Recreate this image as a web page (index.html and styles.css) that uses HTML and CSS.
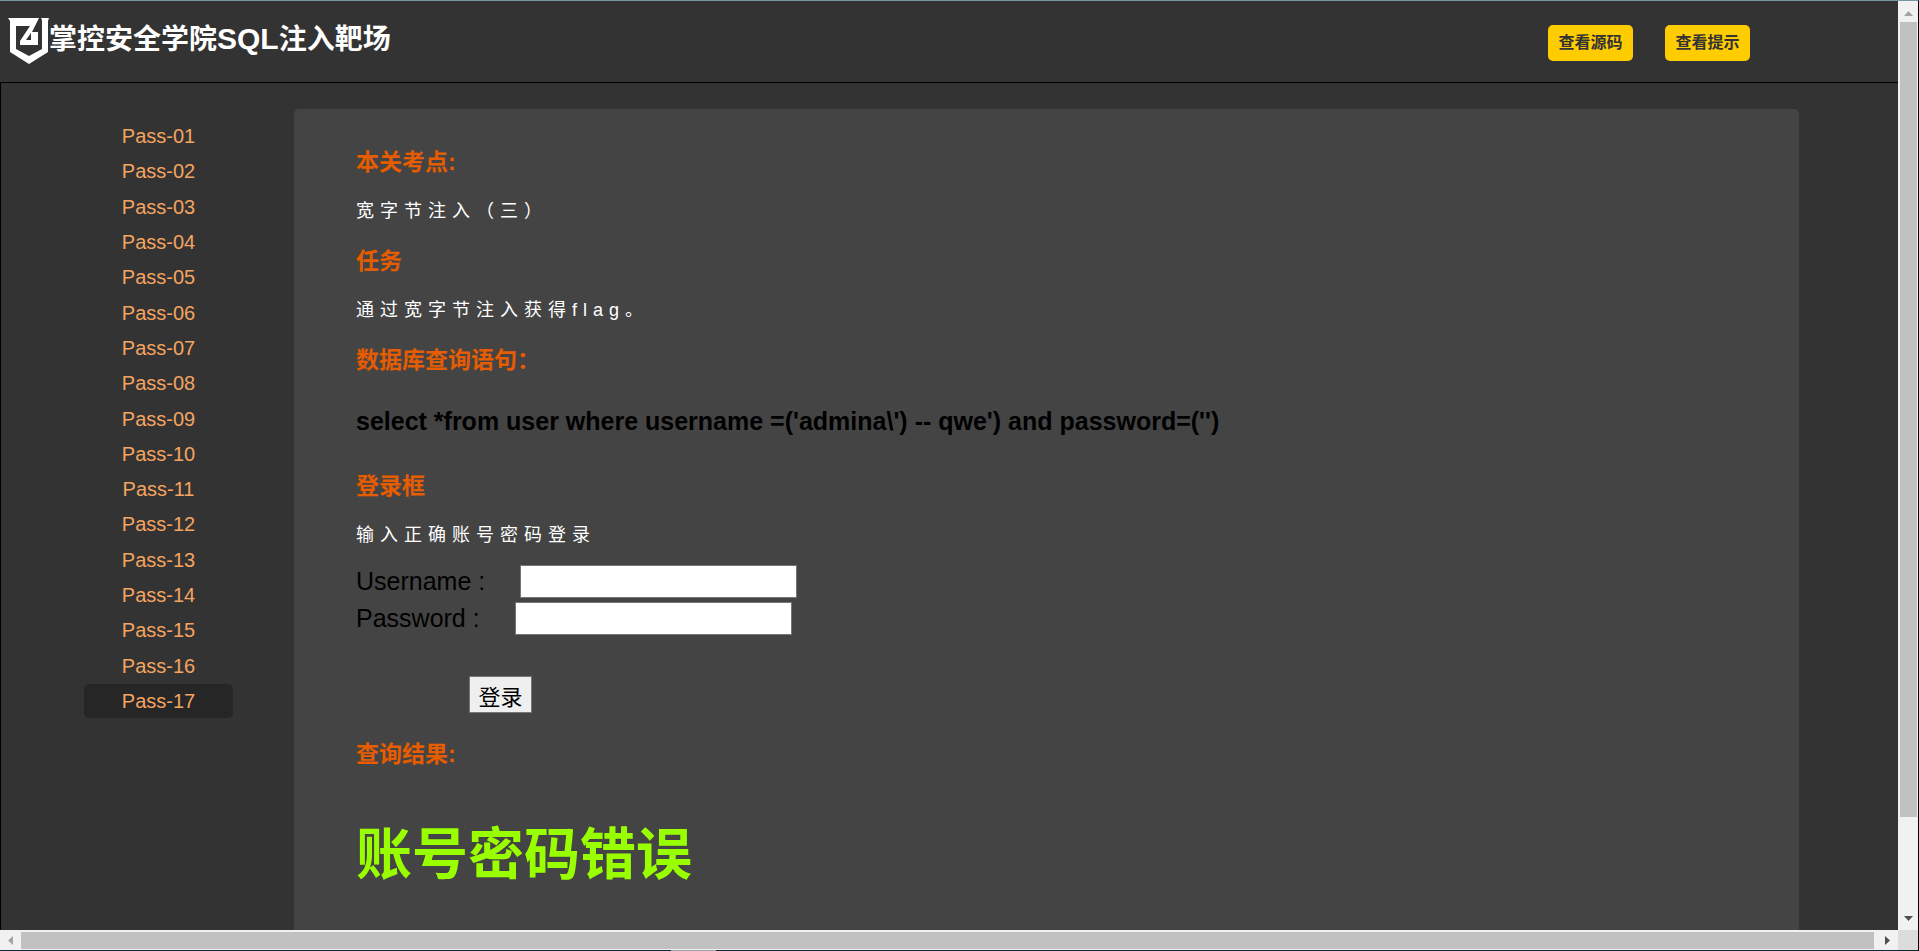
FILE: index.html
```html
<!DOCTYPE html>
<html lang="zh-CN">
<head>
<meta charset="utf-8">
<title>掌控安全学院SQL注入靶场</title>
<link rel="stylesheet" href="styles.css">
</head>
<body>
<div class="window">
  <div class="viewport">
    <header class="header">
      <a class="brand" href="#">
        <svg class="brand-mark" viewBox="0 0 41 46" aria-hidden="true">
          <path fill="#fff" fill-rule="evenodd" d="M0 0H31L24 14H30V27H12V23L22 8H8V31L21 38L34 31V2L33 0H41L40 3V34L21 46L2 34V3ZM18 22L23 15V22Z"/>
        </svg>
        <span class="brand-name">掌控安全学院<span class="brand-latin">SQL</span>注入靶场</span>
      </a>
      <div class="actions">
        <button class="action" type="button">查看源码</button>
        <button class="action" type="button">查看提示</button>
      </div>
    </header>
    <div class="body">
      <nav class="menu">
        <a href="#">Pass-01</a>
        <a href="#">Pass-02</a>
        <a href="#">Pass-03</a>
        <a href="#">Pass-04</a>
        <a href="#">Pass-05</a>
        <a href="#">Pass-06</a>
        <a href="#">Pass-07</a>
        <a href="#">Pass-08</a>
        <a href="#">Pass-09</a>
        <a href="#">Pass-10</a>
        <a href="#">Pass-11</a>
        <a href="#">Pass-12</a>
        <a href="#">Pass-13</a>
        <a href="#">Pass-14</a>
        <a href="#">Pass-15</a>
        <a href="#">Pass-16</a>
        <a class="current" href="#">Pass-17</a>
      </nav>
      <main class="panel">
        <h3 class="title">本关考点:</h3>
        <p class="text">宽字节注入（三）</p>
        <h3 class="title">任务</h3>
        <p class="text">通过宽字节注入获得flag。</p>
        <h3 class="title">数据库查询语句：</h3>
        <p class="query">select *from user where username =('admina\') -- qwe') and password=('')</p>
        <h3 class="title">登录框</h3>
        <p class="text">输入正确账号密码登录</p>
        <form class="login">
          <div class="field"><label for="username">Username :</label><input id="username" type="text"></div>
          <div class="field"><label for="password">Password :</label><input id="password" type="text"></div>
          <button class="submit" type="button">登录</button>
        </form>
        <h3 class="title">查询结果:</h3>
        <p class="result">账号密码错误</p>
      </main>
    </div>
  </div>
  <div class="bar bar-v">
    <svg class="arrow" viewBox="0 0 20 21"><path fill="#a3a3a3" d="M6 15L10.500 10L15 15Z"/></svg>
    <div class="thumb"></div>
    <svg class="arrow" viewBox="0 0 20 21"><path fill="#505050" d="M6 7H15L10.500 12Z"/></svg>
  </div>
  <div class="bar bar-h">
    <svg class="arrow" viewBox="0 0 21 20"><path fill="#a3a3a3" d="M13 6V15L8 10.500Z"/></svg>
    <div class="thumb"></div>
    <svg class="arrow" viewBox="0 0 24 20"><path fill="#505050" d="M11 6V15L16 10.500Z"/></svg>
  </div>
  <div class="corner"></div>
  <div class="edge"><div class="edge-mark"></div></div>
</div>
</body>
</html>
```
FILE: styles.css
```css
* { box-sizing: border-box; }

body {
  margin: 0;
  background: #333;
  font-family: "Liberation Sans", "Noto Sans CJK SC", sans-serif;
  color: #000;
}

.window {
  display: grid;
  grid-template-columns: minmax(0, 1fr) 20px;
  grid-template-rows: minmax(0, 1fr) 20px 1px;
  height: 100vh;
  border-top: 1px solid #7595a5;
  border-right: 1px solid #000;
}

.viewport {
  display: flex;
  flex-direction: column;
  overflow: hidden;
  background: #333;
}

.header {
  display: flex;
  flex: none;
  justify-content: space-between;
  align-items: flex-start;
  height: 81px;
  padding: 17px 148px 0 8px;
}

.brand {
  display: flex;
  color: #fff;
  text-decoration: none;
}

.brand-mark { width: 41px; height: 46px; }

.brand-name {
  font-size: 28px;
  font-weight: 700;
  line-height: 44px;
  white-space: nowrap;
}

.brand-latin { font-size: 30px; line-height: 30px; }

.actions { display: flex; gap: 32px; padding-top: 7px; }

.action {
  width: 85px;
  height: 36px;
  padding: 0;
  border: 0;
  border-radius: 5px;
  background: #fc0;
  color: #333;
  font: 700 16px/36px "Liberation Sans", "Noto Sans CJK SC", sans-serif;
}

.body {
  display: flex;
  flex: 1;
  align-items: flex-start;
  min-height: 0;
  padding: 26px 99px 0 83px;
  border-top: 1px solid #000;
  border-left: 1px solid #000;
}

.menu {
  display: flex;
  flex: none;
  flex-direction: column;
  justify-content: space-between;
  width: 149px;
  min-height: 599px;
  margin: 10px 61px 0 0;
}

.menu a {
  border-radius: 5px;
  color: #f4a460;
  font-size: 20px;
  line-height: 34px;
  text-align: center;
  text-decoration: none;
}

.menu .current { background: #262626; }

.panel {
  flex: 1;
  align-self: stretch;
  padding: 37px 62px 0;
  border-radius: 5px 5px 0 0;
  background: #444;
}

.title {
  margin: 0;
  color: #e65c00;
  font-size: 23px;
  line-height: 32px;
}

.text {
  margin: 17px 0;
  color: #fff;
  font-size: 18px;
  line-height: 33px;
  letter-spacing: 6px;
}

.query {
  margin: 28px 0 32px;
  font-size: 25px;
  font-weight: 700;
  line-height: 34px;
}

.login { margin: -4px 0 25px; font-size: 25px; }

.field { display: flex; gap: 35px; line-height: 33px; margin-bottom: 4px; }

.field input {
  width: 277px;
  height: 33px;
  padding: 0 4px;
  border: 1px solid #767676;
  background: #fff;
  font-size: 22px;
}

.submit {
  display: block;
  width: 63px;
  height: 37px;
  margin: 41px 0 0 113px;
  padding: 0;
  border: 1px solid #767676;
  background: #efefef;
  color: #000;
  font: 22px/34px "Noto Sans CJK SC", sans-serif;
}

.result {
  margin: 43px 0 0;
  color: #9f0;
  font-size: 56px;
  font-weight: 700;
  line-height: 84px;
}

.bar { display: flex; background: #f1f1f1; }
.bar-v { flex-direction: column; }
.arrow { display: block; flex: none; }
.bar-v .arrow { width: 20px; height: 21px; }
.bar-h .arrow { height: 20px; }
.thumb { background: #c1c1c1; }
.bar-v .thumb { height: calc(86% - 4px); margin: 0 1px 0 2px; }
.bar-v .arrow:last-child { margin-top: auto; }
.bar-h .thumb { flex: 1; margin: 2px 0 1px; }
.corner { background: #dcdcdc; }

.edge { grid-column: 1 / -1; background: #14283a; }
.edge-mark { width: 45px; height: 1px; margin-left: 35%; background: #9aa3ad; }
```
